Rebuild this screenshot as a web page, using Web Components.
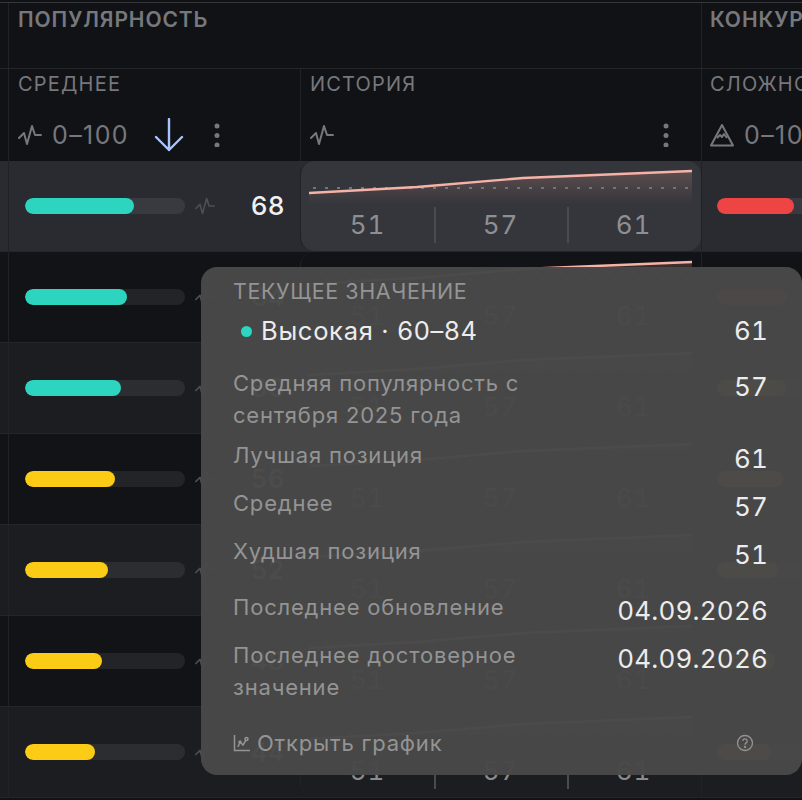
<!DOCTYPE html>
<html lang="ru"><head><meta charset="utf-8"><title>Популярность</title>
<style>
html,body{margin:0;padding:0;background:#111216;overflow:hidden;height:800px}
body{font-family:Inter,"Noto Sans",sans-serif}
</style></head><body>
<kw-table></kw-table>
<script>
const PULSE='<svg viewBox="0 0 24 24" width="24" height="24" fill="none" stroke="currentColor" stroke-width="2" stroke-linejoin="round" stroke-linecap="round"><path d="M1 15l5-5 3 11 5-18 3 9h6"/></svg>';
const KEBAB='<svg viewBox="0 0 6 24" width="6" height="24" fill="currentColor"><circle cx="3" cy="3" r="2.5"/><circle cx="3" cy="12.5" r="2.5"/><circle cx="3" cy="22" r="2.5"/></svg>';
const def=(n,c)=>customElements.define(n,c);

def('kw-bar',class extends HTMLElement{connectedCallback(){
 const v=this.getAttribute('value'),c=this.getAttribute('color');
 this.attachShadow({mode:'open'}).innerHTML=`<style>
 :host{display:block;width:160px;height:16px;border-radius:8px;background:rgba(255,255,255,.075);flex:none;overflow:hidden}
 i{display:block;height:100%;border-radius:8px;background:${c}}</style><i style="width:${v}%"></i>`;
}});

def('kw-spark',class extends HTMLElement{connectedCallback(){
 const id='g'+Math.random().toString(36).slice(2);
 const ys=(this.getAttribute('pts')||'29,23,14,7').split(',');
 const xs=[0,108,214,383];
 const line=xs.map((x,i)=>`${x},${ys[i]}`).join(' ');
 this.attachShadow({mode:'open'}).innerHTML=`<style>:host{display:block;height:40px;margin:0 8px}svg{display:block}</style>
 <svg width="383" height="40" viewBox="0 0 383 40">
 <defs><linearGradient id="${id}" x1="0" y1="0" x2="0" y2="1"><stop offset="0" stop-color="#f4a99c" stop-opacity=".2"/><stop offset="1" stop-color="#f4a99c" stop-opacity="0"/></linearGradient></defs>
 <polygon points="0,40 ${line} 383,40" fill="url(#${id})"/>
 <line x1="4" x2="383" y1="24" y2="24" stroke="#74757a" stroke-width="2" stroke-dasharray="3 9"/>
 <polyline points="${line}" fill="none" stroke="#f6b2a7" stroke-width="2.4"/></svg>`;
}});

def('kw-row',class extends HTMLElement{connectedCallback(){
 const g=k=>this.getAttribute(k);
 const [a,b,c]=g('hist').split(',');
 this.attachShadow({mode:'open'}).innerHTML=`<style>
 :host{display:grid;grid-template-columns:292px 401px 1fr;height:90px;padding-left:8px;border-bottom:1px solid #25262a;background:var(--bg)}
 .c{display:flex;align-items:center;min-width:0;overflow:hidden;border-left:1px solid #212226}
 .a{padding-left:16px}
 .ic{margin-left:10px;color:#4d4e53;display:flex;flex:none}
 .ic svg{width:20px;height:20px}
 .v{margin-left:auto;margin-right:15px;padding-bottom:2px;font-size:26px;font-weight:500;color:#f1f1f1;letter-spacing:.3px;font-feature-settings:"tnum"}
 .h{display:block;border-radius:14px;background:var(--cell,transparent);background-clip:padding-box;overflow:hidden}
 .h kw-spark{margin-top:3px}
 .n{display:grid;grid-template-columns:repeat(3,133px);margin-top:3px;color:var(--num,#8a8b8f);font-size:26px;letter-spacing:1px;text-align:center;line-height:36px;font-feature-settings:"tnum"}
 .n span+span{box-shadow:inset 2px 0 0 #4a4b50}
 .d{padding-left:15px}
 </style>
 <div class="c a"><kw-bar value="${g('value')}" color="${g('color')}"></kw-bar><span class="ic">${PULSE}</span><span class="v">${g('value')}</span></div>
 <div class="c h"><kw-spark></kw-spark><div class="n"><span>${a}</span><span>${b}</span><span>${c}</span></div></div>
 <div class="c d"><kw-bar value="${g('diff')}" color="${g('dcolor')}"></kw-bar></div>`;
}});

def('kw-head',class extends HTMLElement{connectedCallback(){
 this.attachShadow({mode:'open'}).innerHTML=`<style>
 :host{display:block;color:#77787c;border-top:1px solid #36373b;margin-top:2px}
 .top,.sub{display:grid;grid-template-columns:292px 401px 1fr;padding-left:8px}
 .top{height:65px;border-bottom:1px solid #25262a}
 .top div{padding:4px 0 0 9px;font-size:21px;font-weight:600;letter-spacing:.9px;line-height:26px;white-space:nowrap;overflow:hidden;border-left:1px solid #212226}
 .top div:last-child{padding-left:8px}
 .top div.wide{grid-column:span 2}
 .sub{height:92px}
 .sub>div{border-left:1px solid #212226;padding:0 0 0 9px;overflow:hidden;min-width:0}
 .sub>div:last-child{padding-left:8px}
 .t{font-size:20px;line-height:26px;margin-top:2px;letter-spacing:1.2px;white-space:nowrap;height:30px}
 .f{display:flex;align-items:center;height:34px;margin-top:17px;white-space:nowrap;font-size:25px;letter-spacing:1.4px}
 .f svg{flex:none}
 .f .lb{margin-left:10px}
 .arrow{margin-left:25px;color:#a9c4ff;display:flex}
 .hk{margin-left:auto;margin-right:32px;display:flex}
 .k{margin-left:30px;display:flex}
 </style>
 <div class="top"><div class="wide">ПОПУЛЯРНОСТЬ</div><div>КОНКУРЕНЦИЯ</div></div>
 <div class="sub">
  <div><div class="t">СРЕДНЕЕ</div><div class="f">${PULSE}<span class="lb">0–100</span>
   <span class="arrow"><svg width="30" height="34" viewBox="0 0 30 34" fill="none" stroke="currentColor" stroke-width="2.4" stroke-linecap="round" stroke-linejoin="round"><path d="M15 1v31M2 19l13 13 13-13"/></svg></span>
   <span class="k">${KEBAB}</span></div></div>
  <div><div class="t">ИСТОРИЯ</div><div class="f">${PULSE}<span class="hk">${KEBAB}</span></div></div>
  <div><div class="t">СЛОЖНОСТЬ</div><div class="f"><svg width="24" height="24" viewBox="0 0 24 24" fill="none" stroke="currentColor" stroke-width="2" stroke-linejoin="round"><path d="M12 2L1 22.5h22z"/><path d="M7 15l3-3 2 2 2-3 3 4"/></svg><span class="lb">0–100</span></div></div>
 </div>`;
}});

def('kw-tip-row',class extends HTMLElement{connectedCallback(){
 this.attachShadow({mode:'open'}).innerHTML=`<style>
 :host{display:flex;justify-content:space-between;margin-top:var(--gap,12px);line-height:32px}
 .l{font-size:22px;letter-spacing:.8px;color:#949494;max-width:310px}
 .r{font-size:26px;color:#ececec;padding-top:4px;letter-spacing:.2px;white-space:nowrap;font-feature-settings:"tnum"}
 </style><div class="l"><slot></slot></div><div class="r"><slot name="v"></slot></div>`;
}});

def('kw-tooltip',class extends HTMLElement{connectedCallback(){
 this.attachShadow({mode:'open'}).innerHTML=`<style>
 :host{position:absolute;left:201px;top:267px;width:601px;height:508px;box-sizing:border-box;padding:8px 34px 16px 32px;border-radius:16px;background:rgba(72,72,72,.98);display:block}
 .h{font-size:21.5px;line-height:32px;color:#949494;letter-spacing:.6px;white-space:nowrap}
 .cur{display:flex;align-items:center;margin-top:8px;line-height:32px;font-size:25.5px;letter-spacing:.7px;color:#ececec}
 .dot{width:11px;height:11px;border-radius:50%;background:#2dd4bf;margin:0 9px 0 8px;flex:none}
 .cur b{font-weight:400;margin-left:auto;font-size:26px;letter-spacing:.2px;font-feature-settings:"tnum"}
 .foot{display:flex;align-items:center;margin-top:24px;line-height:32px;font-size:22px;color:#949494;letter-spacing:.8px}
 .foot svg{margin-right:6px;flex:none}
 .q{margin-left:auto;margin-right:14px;display:flex}.q svg{margin:0}
 </style>
 <div class="h">ТЕКУЩЕЕ ЗНАЧЕНИЕ</div>
 <div class="cur"><span class="dot"></span>Высокая · 60–84<b>61</b></div>
 <kw-tip-row style="--gap:20px">Средняя популярность с сентября 2025 года<span slot="v">57</span></kw-tip-row>
 <kw-tip-row style="--gap:8px">Лучшая позиция<span slot="v">61</span></kw-tip-row>
 <kw-tip-row>Среднее<span slot="v">57</span></kw-tip-row>
 <kw-tip-row>Худшая позиция<span slot="v">51</span></kw-tip-row>
 <kw-tip-row style="--gap:20px">Последнее обновление<span slot="v">04.09.2026</span></kw-tip-row>
 <kw-tip-row>Последнее достоверное значение<span slot="v">04.09.2026</span></kw-tip-row>
 <div class="foot"><svg width="18" height="18" viewBox="0 0 18 18" fill="none" stroke="currentColor" stroke-width="1.5"><path d="M1.5 1v15.5H17"/><path d="M5 13l2-5 3 3 3-5"/><circle cx="7" cy="8" r="1"/><circle cx="13.5" cy="5" r="1.5"/></svg>Открыть график
 <span class="q"><svg width="18" height="18" viewBox="0 0 18 18" fill="none" stroke="currentColor" stroke-width="1.3"><circle cx="9" cy="9" r="7.5"/><path d="M6.8 7a2.2 2.2 0 1 1 3.4 1.9c-.8.5-1.2 1-1.2 1.8"/><circle cx="9" cy="13" r=".5" fill="currentColor"/></svg></span></div>`;
}});

const rows=[
 {value:68,color:'#2dd4bf',diff:48,dcolor:'#ef4444',bg:'#2a2b30',cell:'#35363b',num:'#8e8f93'},
 {value:64,color:'#2dd4bf',diff:44,dcolor:'#ef4444',bg:'#121317'},
 {value:60,color:'#2dd4bf',diff:43,dcolor:'#facc15',bg:'#1c1d21'},
 {value:56,color:'#facc15',diff:41,dcolor:'#facc15',bg:'#121317'},
 {value:52,color:'#facc15',diff:38,dcolor:'#facc15',bg:'#1c1d21'},
 {value:48,color:'#facc15',diff:36,dcolor:'#facc15',bg:'#121317'},
 {value:44,color:'#facc15',diff:34,dcolor:'#facc15',bg:'#1c1d21'}];
def('kw-table',class extends HTMLElement{connectedCallback(){
 const r=rows.map(o=>`<kw-row value="${o.value}" color="${o.color}" diff="${o.diff}" dcolor="${o.dcolor}" hist="51,57,61" style="--bg:${o.bg};--cell:${o.cell||'transparent'};--num:${o.num||'#8a8b8f'}"></kw-row>`).join('');
 this.attachShadow({mode:'open'}).innerHTML=`<style>:host{display:block;position:relative;height:800px;overflow:hidden}</style><kw-head></kw-head>${r}<kw-tooltip></kw-tooltip>`;
}});
</script></body></html>
